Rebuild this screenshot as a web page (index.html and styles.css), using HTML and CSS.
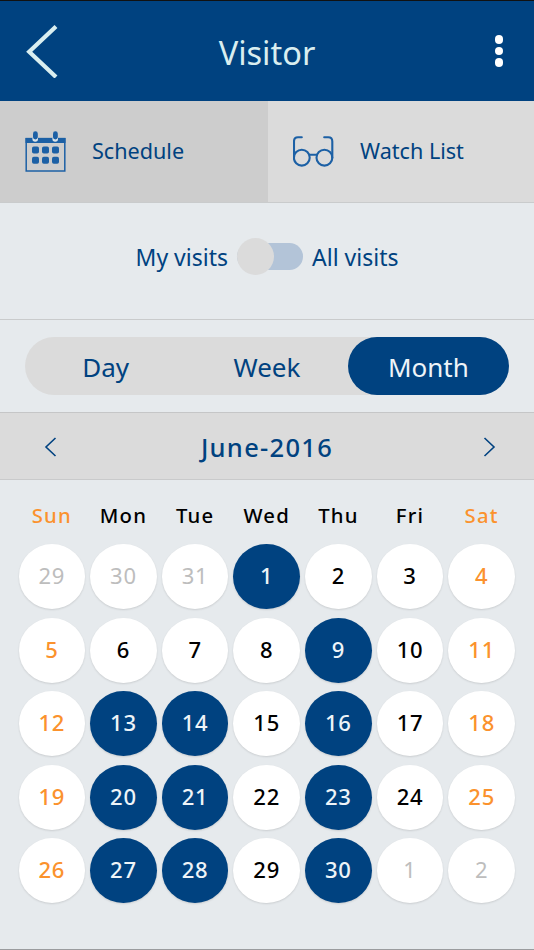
FILE: index.html
```
<!DOCTYPE html>
<html lang="en">
<head>
    <meta charset="UTF-8">
    <meta name="viewport" content="width=device-width, initial-scale=1.0">
    <title>Visitor</title>
    <link rel="stylesheet" href="styles.css">
</head>
<body>
    <div class="screen">
        <header class="header">
            <svg class="back" width="34" height="54" viewBox="0 0 34 54">
                <path d="M31 2.5 L4.2 27.7 L31 53" fill="none" stroke="#d9eef0" stroke-width="4.2"/>
            </svg>
            <h1>Visitor</h1>
            <div class="menu"><i></i><i></i><i></i></div>
        </header>

        <nav class="tabs">
            <div class="tab active">
                <svg width="42" height="42" viewBox="0 0 42 42">
                    <rect x="1.2" y="7.6" width="38.6" height="32.4" fill="none" stroke="#1c60a5" stroke-width="1.5"/>
                    <rect x="0.5" y="7" width="40" height="5" fill="#1c60a5"/>
                    <!-- rings -->
                    <path d="M7.4 6.8 V8 A2.8 2.8 0 0 0 13 8 V6.8 Z" fill="#dde3e6"/>
                    <path d="M27.4 6.8 V8 A2.8 2.8 0 0 0 33 8 V6.8 Z" fill="#dde3e6"/>
                    <rect x="8" y="0.3" width="4.8" height="8.2" rx="2.4" fill="#1c60a5"/>
                    <rect x="28" y="0.3" width="4.8" height="8.2" rx="2.4" fill="#1c60a5"/>
                    <!-- days -->
                    <g fill="#1c60a5">
                        <rect x="7" y="15.5" width="7" height="7" rx="1.8"/>
                        <rect x="17" y="15.5" width="7" height="7" rx="1.8"/>
                        <rect x="27" y="15.5" width="7" height="7" rx="1.8"/>
                        <rect x="7" y="25.7" width="7" height="7" rx="1.8"/>
                        <rect x="17" y="25.7" width="7" height="7" rx="1.8"/>
                        <rect x="27" y="25.7" width="7" height="7" rx="1.8"/>
                    </g>
                </svg>
                <span>Schedule</span>
            </div>
            <div class="tab">
                <svg width="42" height="42" viewBox="0 0 42 42">
                    <g fill="none" stroke="#1c60a5" stroke-width="2.1" stroke-linecap="round">
                        <circle cx="8.8" cy="26.7" r="7.9"/>
                        <circle cx="31.4" cy="26.7" r="7.9"/>
                        <path d="M1 26.7 V10.5 Q1 6.2 5 6.2 H8.8"/>
                        <path d="M39.3 26.7 V10.5 Q39.3 6.2 35.3 6.2 H31.2"/>
                        <path d="M16.4 23.8 H23.9"/>
                    </g>
                </svg>
                <span>Watch List</span>
            </div>
        </nav>

        <div class="filter">
            <span>My visits</span>
            <div class="switch"><div class="knob"></div></div>
            <span>All visits</span>
        </div>

        <div class="range">
            <div class="pills">
                <div class="pill">Day</div>
                <div class="pill">Week</div>
                <div class="pill selected">Month</div>
            </div>
        </div>

        <div class="month">
            <svg width="13" height="20" viewBox="0 0 13 20"><path d="M11.5 1 L2 10 L11.5 19" fill="none" stroke="#004280" stroke-width="1.6"/></svg>
            <span>June-2016</span>
            <svg width="13" height="20" viewBox="0 0 13 20"><path d="M1.5 1 L11 10 L1.5 19" fill="none" stroke="#004280" stroke-width="1.6"/></svg>
        </div>

        <div class="week">
            <div class="weekend">Sun</div>
            <div>Mon</div>
            <div>Tue</div>
            <div>Wed</div>
            <div>Thu</div>
            <div>Fri</div>
            <div class="weekend">Sat</div>
        </div>

        <div class="days">
            <div class="day other">29</div>
            <div class="day other">30</div>
            <div class="day other">31</div>
            <div class="day booked">1</div>
            <div class="day">2</div>
            <div class="day">3</div>
            <div class="day weekend">4</div>

            <div class="day weekend">5</div>
            <div class="day">6</div>
            <div class="day">7</div>
            <div class="day">8</div>
            <div class="day booked">9</div>
            <div class="day">10</div>
            <div class="day weekend">11</div>

            <div class="day weekend">12</div>
            <div class="day booked">13</div>
            <div class="day booked">14</div>
            <div class="day">15</div>
            <div class="day booked">16</div>
            <div class="day">17</div>
            <div class="day weekend">18</div>

            <div class="day weekend">19</div>
            <div class="day booked">20</div>
            <div class="day booked">21</div>
            <div class="day">22</div>
            <div class="day booked">23</div>
            <div class="day">24</div>
            <div class="day weekend">25</div>

            <div class="day weekend">26</div>
            <div class="day booked">27</div>
            <div class="day booked">28</div>
            <div class="day">29</div>
            <div class="day booked">30</div>
            <div class="day other">1</div>
            <div class="day other">2</div>
        </div>
    </div>
</body>
</html>
```
FILE: styles.css
```
* {
    box-sizing: border-box;
}
body {
    margin: 0;
    font-family: "Noto Sans", sans-serif;
    background-color: #e6eaed;
    color: #004280;
}
.screen {
    width: 534px;
    height: 950px;
    border-top: 1px solid #111;
    border-bottom: 1px solid #9a9c9e;
    overflow: hidden;
}
.header {
    height: 100px;
    padding: 0 25px;
    display: grid;
    grid-template-columns: 1fr auto 1fr;
    align-items: center;
    background-color: #004280;
}
.header h1 {
    margin: 0;
    padding-top: 3px;
    font-size: 32.5px;
    font-weight: 400;
    line-height: 40px;
    color: #d9eef0;
}
.menu {
    justify-self: end;
    margin-right: 6px;
    display: flex;
    flex-direction: column;
    gap: 3.2px;
}
.menu i {
    width: 8.4px;
    height: 8.4px;
    border-radius: 50%;
    background-color: white;
}
.tabs {
    display: flex;
    height: 102px;
    border-bottom: 1px solid #c9cbcc;
}
.tab {
    flex: 1;
    display: flex;
    align-items: center;
    gap: 25px;
    padding-left: 25px;
    font-size: 21.6px;
    background-color: #dbdbdb;
}
.tab span {
    padding-bottom: 3px;
}
.tab.active {
    flex: 0 0 268px;
    background-color: #cdcdcd;
}
.filter {
    height: 117px;
    padding-bottom: 9px;
    display: flex;
    align-items: center;
    justify-content: center;
    gap: 9px;
    font-size: 23px;
    border-bottom: 1px solid #c9cbcc;
}
.switch {
    width: 66px;
    height: 27px;
    display: flex;
    align-items: center;
    border-radius: 14px;
    background-color: #b3c4d8;
}
.knob {
    flex: none;
    width: 37px;
    height: 37px;
    border-radius: 50%;
    background-color: #dbdbdb;
}
.range {
    height: 92px;
    padding: 17px 25px;
}
.pills {
    display: flex;
    height: 58px;
    border-radius: 29px;
    background-color: #dbdbdb;
}
.pill {
    flex: 1;
    display: flex;
    align-items: center;
    justify-content: center;
    font-size: 26px;
    padding-top: 1px;
    border-radius: 29px;
}
.pill.selected {
    color: #eef4f8;
    background-color: #004280;
}
.month {
    height: 68px;
    padding: 2px 38px 0 44px;
    display: flex;
    align-items: center;
    justify-content: space-between;
    font-size: 25.5px;
    font-weight: 500;
    letter-spacing: 1.3px;
    background-color: #dbdbdb;
    border-top: 1px solid #c5c6c7;
    border-bottom: 1px solid #c9cacb;
}
.month span {
    margin-right: 6px;
}
.week, .days {
    display: grid;
    grid-template-columns: repeat(7, 1fr);
    column-gap: 5px;
    padding: 0 19px 0 18.5px;
    color: black;
    font-weight: 500;
    letter-spacing: 1.2px;
    text-align: center;
}
.week {
    height: 64px;
    padding-top: 21px;
    font-size: 20.3px;
    line-height: 28px;
}
.days {
    row-gap: 8.5px;
}
.day {
    height: 65px;
    display: flex;
    align-items: center;
    justify-content: center;
    padding-bottom: 3px;
    font-size: 22px;
    letter-spacing: 0.8px;
    border-radius: 50%;
    background-color: white;
    box-shadow: 0 1px 2px rgba(0, 0, 0, 0.12);
}
.weekend {
    color: #fb922d;
}
.day.other {
    color: #bdbdbd;
    font-weight: 400;
}
.day.booked {
    color: #eef4f8;
    background-color: #004280;
}
```
